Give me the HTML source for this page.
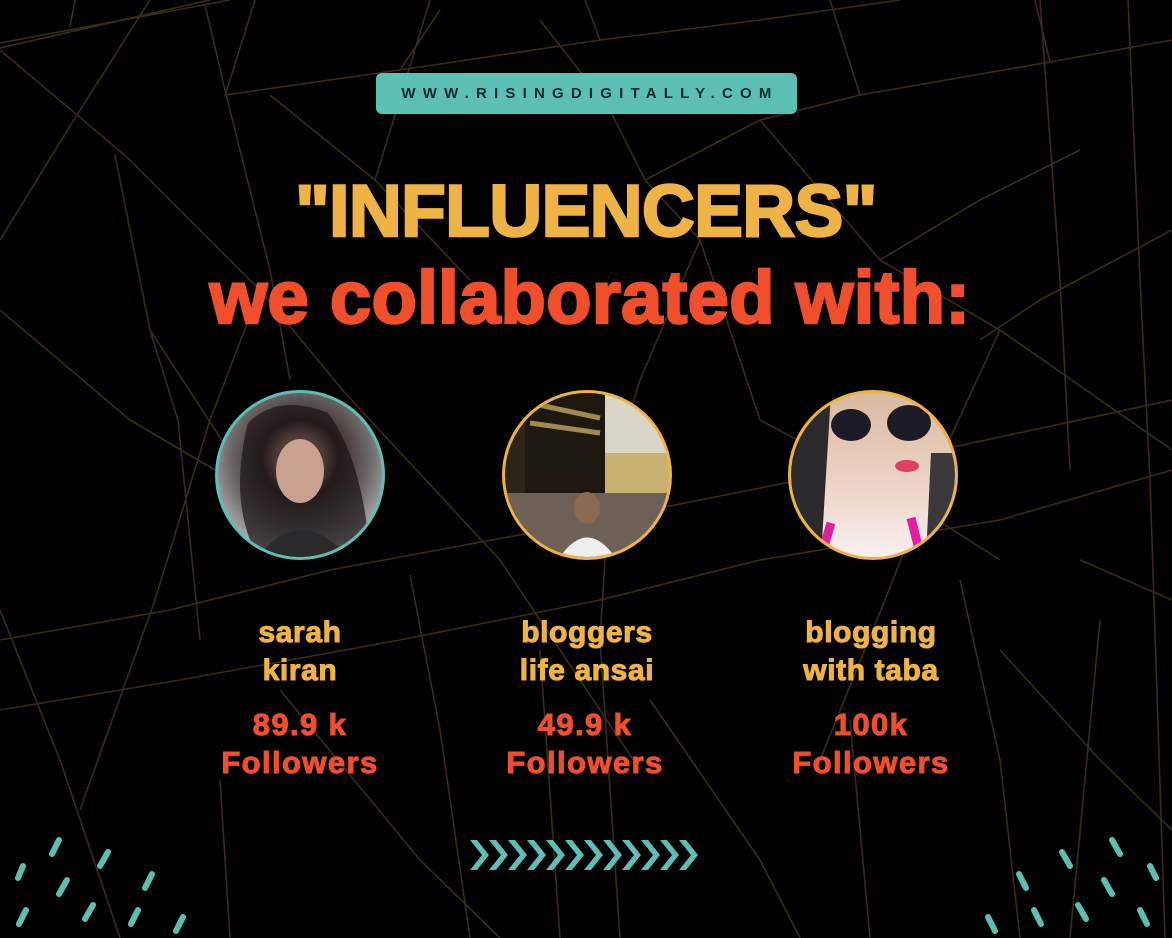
<!DOCTYPE html>
<html><head><meta charset="utf-8"><style>
html,body{margin:0;padding:0;background:#000;}
body{width:1172px;height:938px;position:relative;overflow:hidden;font-family:"Liberation Sans",sans-serif;}
svg.bg{position:absolute;left:0;top:0;}
.pill{position:absolute;left:376px;top:73px;width:421px;height:41px;background:#5bbfb5;border-radius:6px;color:#0d2a28;font-weight:bold;font-size:15px;letter-spacing:7.2px;text-align:center;line-height:41px;text-indent:7px;}
.t1{position:absolute;left:0;width:1172px;text-align:center;top:172px;font-size:73px;font-weight:bold;color:#efb244;line-height:80px;letter-spacing:-0.5px;-webkit-text-stroke:2.5px #efb244;}
.t2{position:absolute;left:0;width:1172px;text-align:center;top:258px;font-size:74px;font-weight:bold;color:#f14f2b;line-height:80px;letter-spacing:0.4px;text-indent:8px;-webkit-text-stroke:2.5px #f14f2b;}
.circ{position:absolute;width:164px;height:164px;border-radius:50%;border:3px solid #efb244;overflow:hidden;}
.col{position:absolute;width:260px;text-align:center;font-weight:bold;letter-spacing:0.6px;}
.nm{color:#efb244;font-size:30px;line-height:38px;top:614px;-webkit-text-stroke:1px #efb244;}
.fl{color:#f14f2b;font-size:31px;line-height:38px;top:706px;-webkit-text-stroke:1px #f14f2b;letter-spacing:1.4px;}
</style></head><body>
<svg class="bg" width="1172" height="938" stroke="#3b2d14" stroke-width="1.6" fill="none">
<path d="M0 43 L230 0 M0 48 L210 0 M70 27 L75 0"/>
<path d="M0 50 L128 158 L260 290 L345 393 M0 240 L75 118 L150 0"/>
<path d="M115 155 L150 330 L178 420 L200 640 M0 310 L130 420 L215 470"/>
<path d="M205 5 L225 90 L270 270 L290 380 M225 95 L400 70 L600 40 L760 20 L900 0"/>
<path d="M225 96 L255 0 M270 95 L375 180 L470 280 M375 180 L395 115 L430 0"/>
<path d="M260 290 L210 420 L155 600 L80 810 M345 393 L500 560 L640 770"/>
<path d="M600 40 L585 0 M540 20 L610 110 L645 180 M400 70 L440 10"/>
<path d="M645 180 L760 120 L860 95 L1050 62 L1172 40 M760 120 L880 260 L1000 330 L1172 450"/>
<path d="M860 95 L830 0 M1050 62 L1035 0 M1040 0 L1060 280 L1070 470 M880 260 L980 200 L1080 150"/>
<path d="M645 180 L700 240 M700 240 L740 360 L760 420 M700 240 L640 380 L615 460"/>
<path d="M1128 0 L1140 280 L1150 480 L1165 938 M1000 330 L940 460 L885 600 L820 760"/>
<path d="M0 640 L170 610 L330 570 L600 520 L800 480 L1172 400"/>
<path d="M0 710 L180 680 L400 640 L600 600 L760 560 L1000 520 L1172 470"/>
<path d="M410 575 L440 730 L470 938 M150 330 L300 560 M0 610 L60 760 L120 938"/>
<path d="M760 420 L890 490 L1000 560 M610 480 L600 640 L620 938 M540 650 L560 938"/>
<path d="M280 690 L420 860 L500 938 M650 700 L760 860 L800 938 M960 580 L1000 760 L1020 938"/>
<path d="M1100 620 L1070 938 M1000 650 L1100 760 L1172 830 M850 720 L870 938 M220 780 L230 938"/>
<path d="M1080 560 L1172 600 M1172 230 L1040 300 L980 340"/>
</svg>
<div class="pill">WWW.RISINGDIGITALLY.COM</div>
<div class="t1">"INFLUENCERS"</div>
<div class="t2">we collaborated with:</div>

<div class="circ" style="left:215px;top:390px;border-color:#5bbfb5;background:radial-gradient(circle at 50% 40%,#c79a88 0 18%,#3a2a26 30%,#6e6a6a 55%,#bdbdbd 80%);">
<svg width="164" height="164"><path d="M30 30 Q60 0 110 20 Q140 60 150 140 L120 164 L40 164 Q10 110 30 30Z" fill="#1a1416" opacity=".7"/><ellipse cx="82" cy="78" rx="24" ry="32" fill="#c9a08f"/><path d="M40 164 Q82 110 130 164Z" fill="#2a2a2c"/></svg></div>
<div class="circ" style="left:502px;top:390px;background:linear-gradient(90deg,#2b2418 0 60%,#d9d6c8 60%);">
<svg width="164" height="164"><rect x="20" y="0" width="80" height="100" fill="#1d1810"/><path d="M25 10 L95 25 M25 30 L95 40" stroke="#a08a50" stroke-width="5"/><rect x="100" y="60" width="64" height="50" fill="#c8b070"/><rect x="0" y="100" width="164" height="64" fill="#6e6258"/><ellipse cx="82" cy="115" rx="13" ry="16" fill="#8a6a50"/><path d="M55 164 Q82 125 110 164Z" fill="#eee"/></svg></div>
<div class="circ" style="left:788px;top:390px;background:linear-gradient(180deg,#d8b9a0 0,#f0d6c8 60%,#f6f0f0 100%);">
<svg width="164" height="164"><path d="M0 0 L40 0 L30 164 L0 164Z" fill="#2b2b2e"/><ellipse cx="60" cy="32" rx="20" ry="16" fill="#1d1b28"/><ellipse cx="118" cy="30" rx="22" ry="18" fill="#1d1b28"/><ellipse cx="116" cy="73" rx="12" ry="6" fill="#e04060"/><path d="M40 130 L30 164 M120 125 L130 164" stroke="#e020a0" stroke-width="9"/><path d="M140 60 L164 60 L164 164 L135 164Z" fill="#3a3a3c"/></svg></div>

<div class="col nm" style="left:170px;">sarah<br>kiran</div>
<div class="col nm" style="left:457px;">bloggers<br>life ansai</div>
<div class="col nm" style="left:741px;">blogging<br>with taba</div>
<div class="col fl" style="left:170px;">89.9 k<br>Followers</div>
<div class="col fl" style="left:455px;">49.9 k<br>Followers</div>
<div class="col fl" style="left:741px;">100k<br>Followers</div>

<svg style="position:absolute;left:0;top:0" width="1172" height="938">
<g fill="#5bbfb5">
<path id="ch" d="M470 840 L482 855 L470 870 L477 870 L489 855 L477 840Z"/>
<use href="#ch" x="19"/><use href="#ch" x="38"/><use href="#ch" x="57"/><use href="#ch" x="76"/><use href="#ch" x="95"/><use href="#ch" x="114"/><use href="#ch" x="133"/><use href="#ch" x="152"/><use href="#ch" x="171"/><use href="#ch" x="190"/><use href="#ch" x="209"/>
</g>
<g stroke="#5bbfb5" stroke-width="6" stroke-linecap="round">
<path d="M59 840 L52 854 M108 852 L100 866 M23 866 L18 878 M67 880 L59 894 M152 874 L145 888 M26 910 L19 924 M93 905 L85 919 M138 910 L131 924 M183 917 L176 931"/>
<path d="M1112 840 L1120 854 M1062 852 L1070 866 M1019 874 L1026 888 M1104 880 L1112 894 M1150 866 L1156 878 M988 917 L995 931 M1034 910 L1041 924 M1078 905 L1086 919 M1140 910 L1147 924"/>
</g>
</svg>
</body></html>
